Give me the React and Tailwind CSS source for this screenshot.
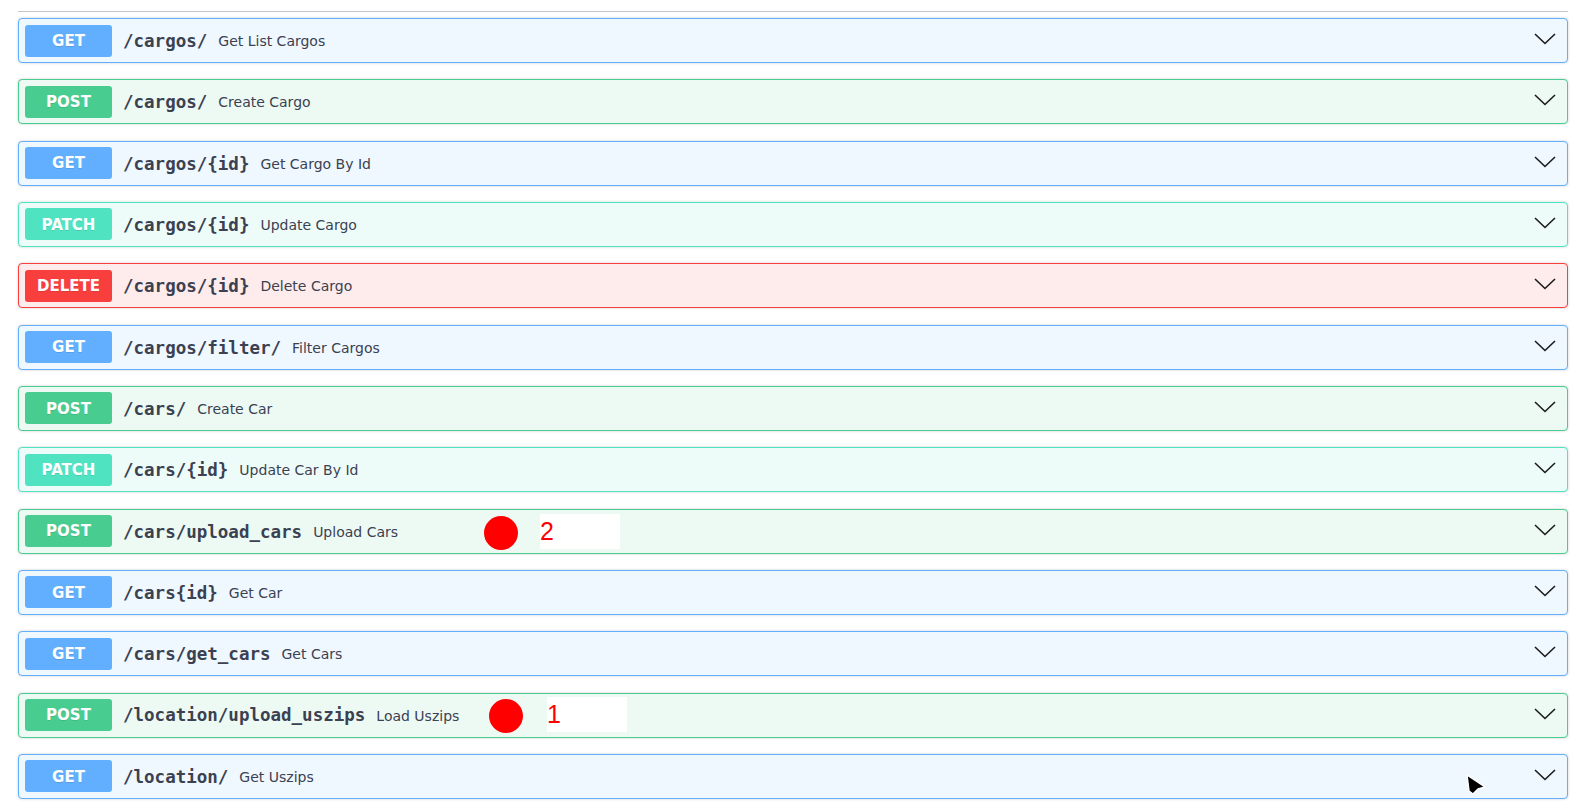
import React from "react";

const styles = {
  GET: { box: "bg-[#eff7ff] border-[#61affe]", badge: "bg-[#61affe]" },
  POST: { box: "bg-[#edfaf4] border-[#49cc90]", badge: "bg-[#49cc90]" },
  PATCH: { box: "bg-[#eefcf9] border-[#50e3c2]", badge: "bg-[#50e3c2]" },
  DELETE: { box: "bg-[#feebeb] border-[#f93e3e]", badge: "bg-[#f93e3e]" },
};

const ops = [
  { method: "GET", path: "/cargos/", desc: "Get List Cargos" },
  { method: "POST", path: "/cargos/", desc: "Create Cargo" },
  { method: "GET", path: "/cargos/{id}", desc: "Get Cargo By Id" },
  { method: "PATCH", path: "/cargos/{id}", desc: "Update Cargo" },
  { method: "DELETE", path: "/cargos/{id}", desc: "Delete Cargo" },
  { method: "GET", path: "/cargos/filter/", desc: "Filter Cargos" },
  { method: "POST", path: "/cars/", desc: "Create Car" },
  { method: "PATCH", path: "/cars/{id}", desc: "Update Car By Id" },
  { method: "POST", path: "/cars/upload_cars", desc: "Upload Cars", mark: "2" },
  { method: "GET", path: "/cars{id}", desc: "Get Car" },
  { method: "GET", path: "/cars/get_cars", desc: "Get Cars" },
  { method: "POST", path: "/location/upload_uszips", desc: "Load Uszips", mark: "1" },
  { method: "GET", path: "/location/", desc: "Get Uszips" },
];

function Chevron() {
  return (
    <svg width="22" height="12" viewBox="0 0 22 12" className="text-[#1b1b1b]">
      <path d="M1 1 L11 10.5 L21 1" fill="none" stroke="currentColor" strokeWidth="1.6" />
    </svg>
  );
}

// red dot + white label box drawn over the row
function Marker({ label }) {
  const first = label === "2";
  return (
    <>
      <div
        className={`absolute w-[34px] h-[34px] rounded-full bg-[#ff0000] ${first ? "left-[465px] top-[6px]" : "left-[470px] top-[5px]"}`}
      />
      <div
        className={`absolute w-[80px] h-[35px] bg-white text-[#ff0000] text-[25px] leading-[35px] font-['Liberation_Sans',sans-serif] ${first ? "left-[521px] top-[4px] pl-[0px]" : "left-[528px] top-[3px] pl-[0px]"}`}
      >
        {label}
      </div>
    </>
  );
}

function Row({ op }) {
  const s = styles[op.method];
  return (
    <div
      className={`relative h-[45px] flex items-center border rounded-[4px] pl-[6px] pr-[11px] shadow-[0_0_3px_rgba(0,0,0,0.19)] ${s.box}`}
    >
      <div
        className={`w-[87px] h-[32px] shrink-0 flex items-center justify-center rounded-[3px] text-white font-bold text-[15px] pt-[1px] [text-shadow:0_1px_0_rgba(0,0,0,0.1)] ${s.badge}`}
      >
        {op.method}
      </div>
      <span className="pl-[11px] pr-[11px] pt-[1px] font-['DejaVu_Sans_Mono',monospace] font-bold text-[17.5px] text-[#3b4151]">
        {op.path}
      </span>
      <span className="text-[14px] pt-[2px] text-[#3b4151]">{op.desc}</span>
      <div className="ml-auto flex items-center pb-[3px]">
        <Chevron />
      </div>
      {op.mark && <Marker label={op.mark} />}
    </div>
  );
}

export default function App() {
  return (
    <div className="relative w-[1584px] h-[810px] bg-white overflow-hidden pl-[18px] pr-[16px] pt-[11px] font-['DejaVu_Sans',sans-serif]">
      <div className="border-t border-[#c4c6cb]" />
      <div className="mt-[6px] flex flex-col gap-[16.33px]">
        {ops.map((op, i) => (
          <Row key={i} op={op} />
        ))}
      </div>
      {/* mouse pointer */}
      <svg className="absolute left-[1460px] top-[768px]" width="30" height="30" viewBox="0 0 30 30">
        <path
          d="M7 7 L25 19 L18 21 L13 26 L9 23 Z"
          fill="#000"
          stroke="#fff"
          strokeWidth="1.5"
          strokeLinejoin="round"
        />
      </svg>
    </div>
  );
}
